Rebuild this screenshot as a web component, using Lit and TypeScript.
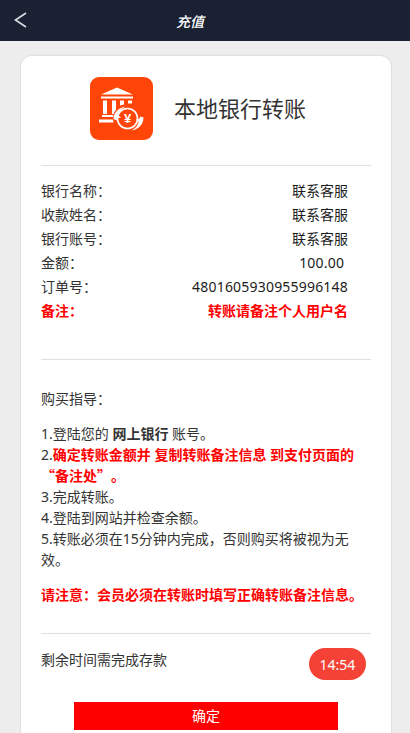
import { LitElement, html, css } from "lit";
import { customElement } from "lit/decorators.js";

const rows: [string, string, string?][] = [
  ["银行名称：", "联系客服"],
  ["收款姓名：", "联系客服"],
  ["银行账号：", "联系客服"],
  ["金额：", "100.00\u00a0", "num"],
  ["订单号：", "4801605930955996148", "num"],
  ["备注：", "转账请备注个人用户名", "red"],
];

@customElement("app-root")
export class AppRoot extends LitElement {
  static styles = css`
    :host { display: block; height: 733px; overflow: hidden; background: #ededed; color: #333;
      font-family: "Noto Sans", "Noto Sans CJK SC", sans-serif; font-size: 14px; text-spacing-trim: space-all; }
    .top { height: 41px; background: #1a2133; display: flex; align-items: center; justify-content: center; padding-right: 30px; position: relative; }
    .top span { color: #fff; font-style: italic; font-size: 14px; font-weight: 500; }
    .back { position: absolute; left: 14px; top: 12px; }
    .card { margin: 15px 19px 0 21px; background: #fff; border-radius: 10px; padding: 0 20px 20px;
      box-shadow: 0 0 2px rgba(0,0,0,.2); }
    .head { height: 104px; padding: 0 0 5px 49px; display: flex; align-items: center; justify-content: flex-start; gap: 21px; border-bottom: 1px solid #e0e0e0; }
    .logo { width: 63px; height: 63px; display: block; }
    .title { font-size: 22px; line-height: 30px; color: #333; }
    .rows { padding: 13px 23px 36px 0; border-bottom: 1px solid #e0e0e0; }
    .row { display: flex; justify-content: space-between; height: 24px; line-height: 24px; white-space: nowrap; }
    .row .v { color: #1c1c1c; }
    .row.num .v { letter-spacing: .2px; }
    .red, .row.red .v { color: #f00; font-weight: 700; }
    .guide { padding-top: 28px; line-height: 21px; border-bottom: 1px solid #e0e0e0; padding-bottom: 28px; }
    .guide p { margin: 0; }
    .steps { margin-top: 14px !important; }
    .note { margin-top: 14px !important; }
    .q { font-family: "Noto Sans CJK SC", sans-serif; }
    .remain { display: flex; justify-content: space-between; align-items: flex-start; padding: 14px 5px 0 0; }
    .remain .t { line-height: 24px; }
    .pill { width: 57px; height: 32px; border-radius: 16px; background: #f44336; color: #fff; display: flex; align-items: center; justify-content: center; font-weight: 400; }
    .btn { display: block; margin: 22px auto 0; width: 264px; height: 28px; border: 0; padding: 0; background: #f00; color: #fff; font: inherit; line-height: 28px; text-align: center; }
    .yen { font: 700 13px "Liberation Sans", sans-serif; fill: #fff; text-anchor: middle; }
  `;

  render() {
    return html`
      <div class="top">
        <svg class="back" width="14" height="16" viewBox="0 0 14 16"><path d="M12 1 1.5 8 12 15" fill="none" stroke="#d8dbe0" stroke-width="1.7"/></svg>
        <span>充值</span>
      </div>
      <div class="card">
        <div class="head">
          <svg class="logo" viewBox="0 0 63 63">
            <rect width="63" height="63" rx="9" fill="#ff4508"/>
            <path fill="#fff" d="M27 10.5 11 17.5h32zM11 19.5h32v2H11zM13 23.5h4V37h-4zM22 23.5h4V37h-4zM30 23.5h4v5h-4zM38 23.5h4v3h-4zM12 38h12v2H12zM9 42.5h17v3H9z"/>
            <circle cx="37.500" cy="41.500" r="14.500" fill="#ff4508"/>
            <circle cx="37.500" cy="41.500" r="10" fill="none" stroke="#fff" stroke-width="1.6"/>
            <path fill="#fff" d="M23.500 42c0-7 6-11.500 12-12.500-4 2-6.500 5-7 9l2.500 2-3 .5-1.500 2.500zM53.500 40.500c0 7-5 12-12 13 4-2 6.500-5 7-9l-2.500-2 3-.5 1.500-2.500z"/>
            <text class="yen" x="37.500" y="46">¥</text>
          </svg>
          <span class="title">本地银行转账</span>
        </div>
        <div class="rows">
          ${rows.map(([k, v, c]) => html`<div class="row ${c ?? ""}"><span>${k}</span><span class="v">${v}</span></div>`)}
        </div>
        <div class="guide">
          <p>购买指导：</p>
          <p class="steps">1.登陆您的 <b>网上银行</b> 账号。<br>
          2.<span class="red">确定转账金额并 复制转账备注信息 到支付页面的<wbr><span class="q">“</span>备注处<span class="q">”。</span></span><br>
          3.完成转账。<br>
          4.登陆到网站并检查余额。<br>
          5.转账必须在15分钟内完成，否则购买将被视为无效。</p>
          <p class="note red">请注意：会员必须在转账时填写正确转账备注信息。</p>
        </div>
        <div class="remain"><span class="t">剩余时间需完成存款</span><span class="pill">14:54</span></div>
        <button class="btn">确定</button>
      </div>
    `;
  }
}
